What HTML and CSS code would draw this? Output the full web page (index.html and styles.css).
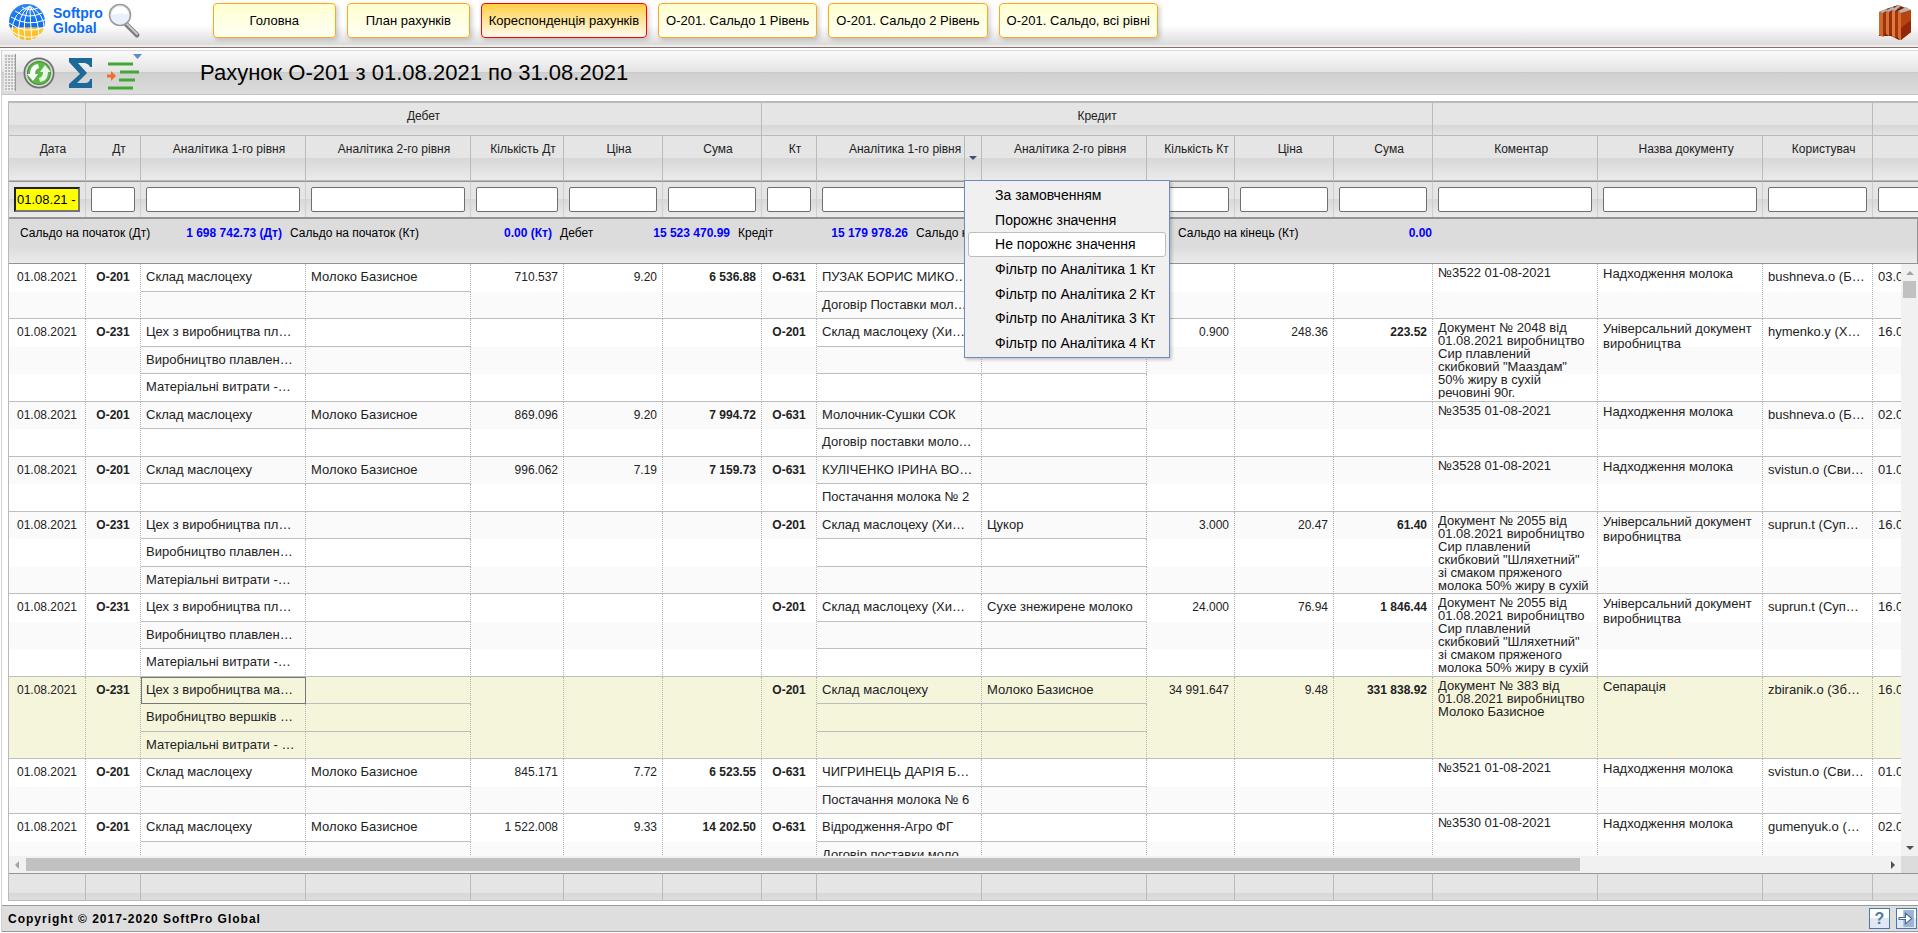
FILE: index.html
```html
<!DOCTYPE html>
<html lang="uk">
<head>
    <meta charset="UTF-8">
    <meta name="viewport" content="width=device-width, initial-scale=1.0">
    <title>Рахунок О-201 - Softpro Global</title>
    <link rel="stylesheet" href="styles.css">
</head>
<body>

    <!-- Header -->
    <header class="header">
        <a class="logo" href="#">
            <svg width="38" height="38" viewBox="0 0 38 38">
                <defs>
                    <linearGradient id="globe" x1="0" y1="0" x2="0" y2="1">
                        <stop offset="0" stop-color="#2f86f0"/>
                        <stop offset="0.64" stop-color="#0d6cf0"/>
                        <stop offset="0.66" stop-color="#ffc93c"/>
                        <stop offset="1" stop-color="#fbb917"/>
                    </linearGradient>
                </defs>
                <circle cx="19" cy="19" r="18" fill="url(#globe)"/>
                <g fill="none" stroke="#fff" stroke-width="1">
                    <path d="M22 3Q8 12 11 36M22 3Q14 14 17 37M22 3Q22 16 24 37M22 3Q30 14 31 33M22 3Q37 12 36 26M22 3Q4 9 4 29"/>
                    <path d="M14 4Q21 9 30 5M7 8Q20 17 34 10M3 14Q19 24 37 17M1 20Q18 32 37 24M3 28Q17 38 33 32"/>
                </g>
            </svg>
            <span class="logo-name">Softpro<br>Global</span>
        </a>
        <button class="search-btn" aria-label="Пошук">
            <svg width="34" height="36" viewBox="0 0 34 36">
                <path d="M18 21L29 32" stroke="#7d7d7d" stroke-width="5" stroke-linecap="round"/>
                <path d="M19 21L29 31" stroke="#c9c9c9" stroke-width="2" stroke-linecap="round"/>
                <circle cx="12" cy="12" r="10.5" fill="#e6f1fb" stroke="#9b9b9b" stroke-width="1.6"/>
                <path d="M4 12a8 8 0 0 1 16 -1q-8 -2 -16 1z" fill="#fff"/>
            </svg>
        </button>
        <nav class="menu">
            <button class="menu-btn">Головна</button>
            <button class="menu-btn">План рахунків</button>
            <button class="menu-btn active">Кореспонденція рахунків</button>
            <button class="menu-btn">О-201. Сальдо 1 Рівень</button>
            <button class="menu-btn">О-201. Сальдо 2 Рівень</button>
            <button class="menu-btn">О-201. Сальдо, всі рівні</button>
        </nav>
        <button class="books-btn" aria-label="Довідники">
            <svg width="36" height="36" viewBox="0 0 36 36">
                <path d="M2 8L9 5L15 3L21 1L34 6V28L22 36L14 32L2 32z" fill="#7c2203"/>
                <path d="M2 8L6 9V33L2 31z" fill="#d0682f"/>
                <path d="M6 9L9 8V28L6 33z" fill="#a03509"/>
                <path d="M9 7L12 8V32L9 30z" fill="#d4703a"/>
                <path d="M12 8L15 7V29L12 32z" fill="#9a3008"/>
                <path d="M15 6L18 7V34L15 32z" fill="#dc7c44"/>
                <path d="M18 7L21 7V33L18 34z" fill="#a4370a"/>
                <path d="M21 7L24 9V36L21 34z" fill="#d66e34"/>
                <path d="M24 9L34 6V28L24 36z" fill="#b8430f"/>
                <path d="M24 24L34 16V28L24 36z" fill="#93290a"/>
                <path d="M2 8L9 5L11 6L6 9zM9 7L15 3L18 4L12 8zM15 6L21 1L24 2L18 7zM21 7L29 3L34 6L24 9z" fill="#b9b4ae"/>
            </svg>
        </button>
    </header>

    <div class="page">
        <!-- Toolbar -->
        <div class="toolbar">
            <span class="grip"></span>
            <button class="tool-btn" aria-label="Оновити">
                <svg width="32" height="34" viewBox="0 0 32 34">
                    <circle cx="16" cy="17" r="15.5" fill="#6f6f6f"/>
                    <circle cx="16" cy="17" r="13.8" fill="#d7d7d7"/>
                    <circle cx="16" cy="17" r="12" fill="#3f8f2d"/>
                    <circle cx="16" cy="17" r="11" fill="#58b947"/>
                    <path d="M15 8Q7 9 7 18L4 18L10 25L15 18L12 18Q12 13 16 12z" fill="#fff"/>
                    <path d="M17 26Q25 25 25 16L28 16L22 9L17 16L20 16Q20 21 16 22z" fill="#e9f7e6"/>
                </svg>
            </button>
            <button class="tool-btn" aria-label="Сума">
                <svg width="24" height="30" viewBox="0 0 24 30">
                    <path d="M0 0H23V9H21Q20 6 16 5H9L18 15L8 25H17Q21 24 21 21H23V30H0V26L11 16L0 4z" fill="#1d6a9a"/>
                </svg>
            </button>
            <button class="tool-btn" aria-label="Рівні">
                <svg width="36" height="38" viewBox="0 0 36 38">
                    <path d="M26 0H35L30.500 5z" fill="#5b8bd0"/>
                    <path d="M1 10H26M13 18H32M12 26H28M1 34H26" stroke="#41a832" stroke-width="3"/>
                    <path d="M0 22H6" stroke="#f0702a" stroke-width="3"/>
                    <path d="M4 17L9 22L4 27z" fill="#f0702a"/>
                </svg>
            </button>
            <h1 class="title">Рахунок О-201 з 01.08.2021 по 31.08.2021</h1>
        </div>

        <!-- Grid -->
        <div class="grid">
            <table class="grid-table head-table">
                <colgroup>
                    <col class="w-date"><col class="w-code"><col class="w-text"><col class="w-text"><col class="w-qty"><col class="w-sum"><col class="w-sum">
                    <col class="w-code"><col class="w-text"><col class="w-text"><col class="w-qtyk"><col class="w-sum"><col class="w-sum">
                    <col class="w-text"><col class="w-text"><col class="w-user"><col class="w-text">
                </colgroup>
                <thead>
                    <tr class="group-row">
                        <th></th>
                        <th colspan="6">Дебет</th>
                        <th colspan="6">Кредит</th>
                        <th colspan="3"></th>
                        <th></th>
                    </tr>
                    <tr class="name-row">
                        <th>Дата</th>
                        <th>Дт</th>
                        <th>Аналітика 1-го рівня</th>
                        <th>Аналітика 2-го рівня</th>
                        <th>Кількість Дт</th>
                        <th>Ціна</th>
                        <th>Сума</th>
                        <th>Кт</th>
                        <th class="with-menu">Аналітика 1-го рівня
                            <button class="col-arrow" aria-label="Меню колонки"></button>
                            <!-- Column menu -->
                            <div class="col-menu">
                                <button>За замовченням</button>
                                <button>Порожнє значення</button>
                                <button class="hover">Не порожнє значення</button>
                                <button>Фільтр по Аналітика 1 Кт</button>
                                <button>Фільтр по Аналітика 2 Кт</button>
                                <button>Фільтр по Аналітика 3 Кт</button>
                                <button>Фільтр по Аналітика 4 Кт</button>
                            </div>
                        </th>
                        <th>Аналітика 2-го рівня</th>
                        <th>Кількість Кт</th>
                        <th>Ціна</th>
                        <th>Сума</th>
                        <th>Коментар</th>
                        <th>Назва документу</th>
                        <th>Користувач</th>
                        <th></th>
                    </tr>
                    <tr class="filter-row">
                        <td><input class="date-filter" type="text" value="01.08.21 - 31.08.21" aria-label="Дата"></td>
                        <td><input type="text" aria-label="Дт"></td>
                        <td><input type="text" aria-label="Аналітика 1 Дт"></td>
                        <td><input type="text" aria-label="Аналітика 2 Дт"></td>
                        <td><input type="text" aria-label="Кількість Дт"></td>
                        <td><input type="text" aria-label="Ціна Дт"></td>
                        <td><input type="text" aria-label="Сума Дт"></td>
                        <td><input type="text" aria-label="Кт"></td>
                        <td><input type="text" aria-label="Аналітика 1 Кт"></td>
                        <td><input type="text" aria-label="Аналітика 2 Кт"></td>
                        <td><input type="text" aria-label="Кількість Кт"></td>
                        <td><input type="text" aria-label="Ціна Кт"></td>
                        <td><input type="text" aria-label="Сума Кт"></td>
                        <td><input type="text" aria-label="Коментар"></td>
                        <td><input type="text" aria-label="Назва документу"></td>
                        <td><input type="text" aria-label="Користувач"></td>
                        <td><input type="text" aria-label="Дата документу"></td>
                    </tr>
                </thead>
            </table>

            <!-- Totals -->
            <div class="totals">
                <div class="total wide"><span>Сальдо на початок (Дт)</span><b>1 698 742.73 (Дт)</b></div>
                <div class="total wide"><span>Сальдо на початок (Кт)</span><b>0.00 (Кт)</b></div>
                <div class="total"><span>Дебет</span><b>15 523 470.99</b></div>
                <div class="total"><span>Кредіт</span><b>15 179 978.26</b></div>
                <div class="total mid"><span>Сальдо на кінець (Дт)</span></div>
                <div class="total mid"><span>Сальдо на кінець (Кт)</span><b>0.00</b></div>
            </div>

            <!-- Rows -->
            <div class="grid-body">
                <div class="rows">
                    <table class="grid-table data-table">
                        <colgroup>
                            <col class="w-date"><col class="w-code"><col class="w-text"><col class="w-text"><col class="w-qty"><col class="w-sum"><col class="w-sum">
                            <col class="w-code"><col class="w-text"><col class="w-text"><col class="w-qtyk"><col class="w-sum"><col class="w-sum">
                            <col class="w-text"><col class="w-text"><col class="w-user"><col class="w-text">
                        </colgroup>
                        <tbody>
                            <tr>
                                <td rowspan="2" class="center">01.08.2021</td>
                                <td rowspan="2" class="center bold">О-201</td>
                                <td>Склад маслоцеху</td>
                                <td>Молоко Базисное</td>
                                <td rowspan="2" class="num">710.537</td>
                                <td rowspan="2" class="num">9.20</td>
                                <td rowspan="2" class="num bold">6 536.88</td>
                                <td rowspan="2" class="center bold">О-631</td>
                                <td>ПУЗАК БОРИС МИКО…</td>
                                <td></td>
                                <td rowspan="2"></td>
                                <td rowspan="2"></td>
                                <td rowspan="2"></td>
                                <td rowspan="2"><div class="comment">№3522 01-08-2021</div></td>
                                <td rowspan="2"><div class="doc">Надходження молока</div></td>
                                <td rowspan="2">bushneva.o (Б…</td>
                                <td rowspan="2">03.0</td>
                            </tr>
                            <tr><td></td><td></td><td>Договір Поставки мол…</td><td></td></tr>

                            <tr>
                                <td rowspan="3" class="center">01.08.2021</td>
                                <td rowspan="3" class="center bold">О-231</td>
                                <td>Цех з виробництва пл…</td>
                                <td></td>
                                <td rowspan="3"></td>
                                <td rowspan="3"></td>
                                <td rowspan="3"></td>
                                <td rowspan="3" class="center bold">О-201</td>
                                <td>Склад маслоцеху (Хи…</td>
                                <td></td>
                                <td rowspan="3" class="num">0.900</td>
                                <td rowspan="3" class="num">248.36</td>
                                <td rowspan="3" class="num bold">223.52</td>
                                <td rowspan="3"><div class="comment">Документ № 2048 від 01.08.2021 виробництво Сир плавлений скибковий "Мааздам" 50% жиру в сухій речовині 90г.</div></td>
                                <td rowspan="3"><div class="doc">Універсальний документ виробництва</div></td>
                                <td rowspan="3">hymenko.y (Х…</td>
                                <td rowspan="3">16.0</td>
                            </tr>
                            <tr><td>Виробництво плавлен…</td><td></td><td></td><td></td></tr>
                            <tr><td>Матеріальні витрати -…</td><td></td><td></td><td></td></tr>

                            <tr>
                                <td rowspan="2" class="center">01.08.2021</td>
                                <td rowspan="2" class="center bold">О-201</td>
                                <td>Склад маслоцеху</td>
                                <td>Молоко Базисное</td>
                                <td rowspan="2" class="num">869.096</td>
                                <td rowspan="2" class="num">9.20</td>
                                <td rowspan="2" class="num bold">7 994.72</td>
                                <td rowspan="2" class="center bold">О-631</td>
                                <td>Молочник-Сушки СОК</td>
                                <td></td>
                                <td rowspan="2"></td>
                                <td rowspan="2"></td>
                                <td rowspan="2"></td>
                                <td rowspan="2"><div class="comment">№3535 01-08-2021</div></td>
                                <td rowspan="2"><div class="doc">Надходження молока</div></td>
                                <td rowspan="2">bushneva.o (Б…</td>
                                <td rowspan="2">02.0</td>
                            </tr>
                            <tr><td></td><td></td><td>Договір поставки моло…</td><td></td></tr>

                            <tr>
                                <td rowspan="2" class="center">01.08.2021</td>
                                <td rowspan="2" class="center bold">О-201</td>
                                <td>Склад маслоцеху</td>
                                <td>Молоко Базисное</td>
                                <td rowspan="2" class="num">996.062</td>
                                <td rowspan="2" class="num">7.19</td>
                                <td rowspan="2" class="num bold">7 159.73</td>
                                <td rowspan="2" class="center bold">О-631</td>
                                <td>КУЛІЧЕНКО ІРИНА ВО…</td>
                                <td></td>
                                <td rowspan="2"></td>
                                <td rowspan="2"></td>
                                <td rowspan="2"></td>
                                <td rowspan="2"><div class="comment">№3528 01-08-2021</div></td>
                                <td rowspan="2"><div class="doc">Надходження молока</div></td>
                                <td rowspan="2">svistun.o (Сви…</td>
                                <td rowspan="2">01.0</td>
                            </tr>
                            <tr><td></td><td></td><td>Постачання молока № 2</td><td></td></tr>

                            <tr>
                                <td rowspan="3" class="center">01.08.2021</td>
                                <td rowspan="3" class="center bold">О-231</td>
                                <td>Цех з виробництва пл…</td>
                                <td></td>
                                <td rowspan="3"></td>
                                <td rowspan="3"></td>
                                <td rowspan="3"></td>
                                <td rowspan="3" class="center bold">О-201</td>
                                <td>Склад маслоцеху (Хи…</td>
                                <td>Цукор</td>
                                <td rowspan="3" class="num">3.000</td>
                                <td rowspan="3" class="num">20.47</td>
                                <td rowspan="3" class="num bold">61.40</td>
                                <td rowspan="3"><div class="comment">Документ № 2055 від 01.08.2021 виробництво Сир плавлений скибковий "Шляхетний" зі смаком пряженого молока 50% жиру в сухій речов. 100г.</div></td>
                                <td rowspan="3"><div class="doc">Універсальний документ виробництва</div></td>
                                <td rowspan="3">suprun.t (Суп…</td>
                                <td rowspan="3">16.0</td>
                            </tr>
                            <tr><td>Виробництво плавлен…</td><td></td><td></td><td></td></tr>
                            <tr><td>Матеріальні витрати -…</td><td></td><td></td><td></td></tr>

                            <tr>
                                <td rowspan="3" class="center">01.08.2021</td>
                                <td rowspan="3" class="center bold">О-231</td>
                                <td>Цех з виробництва пл…</td>
                                <td></td>
                                <td rowspan="3"></td>
                                <td rowspan="3"></td>
                                <td rowspan="3"></td>
                                <td rowspan="3" class="center bold">О-201</td>
                                <td>Склад маслоцеху (Хи…</td>
                                <td>Сухе знежирене молоко</td>
                                <td rowspan="3" class="num">24.000</td>
                                <td rowspan="3" class="num">76.94</td>
                                <td rowspan="3" class="num bold">1 846.44</td>
                                <td rowspan="3"><div class="comment">Документ № 2055 від 01.08.2021 виробництво Сир плавлений скибковий "Шляхетний" зі смаком пряженого молока 50% жиру в сухій речов. 100г.</div></td>
                                <td rowspan="3"><div class="doc">Універсальний документ виробництва</div></td>
                                <td rowspan="3">suprun.t (Суп…</td>
                                <td rowspan="3">16.0</td>
                            </tr>
                            <tr><td>Виробництво плавлен…</td><td></td><td></td><td></td></tr>
                            <tr><td>Матеріальні витрати -…</td><td></td><td></td><td></td></tr>

                            <tr class="selected">
                                <td rowspan="3" class="center">01.08.2021</td>
                                <td rowspan="3" class="center bold">О-231</td>
                                <td class="focused">Цех з виробництва ма…</td>
                                <td></td>
                                <td rowspan="3"></td>
                                <td rowspan="3"></td>
                                <td rowspan="3"></td>
                                <td rowspan="3" class="center bold">О-201</td>
                                <td>Склад маслоцеху</td>
                                <td>Молоко Базисное</td>
                                <td rowspan="3" class="num">34 991.647</td>
                                <td rowspan="3" class="num">9.48</td>
                                <td rowspan="3" class="num bold">331 838.92</td>
                                <td rowspan="3"><div class="comment">Документ № 383 від 01.08.2021 виробництво Молоко Базисное</div></td>
                                <td rowspan="3"><div class="doc">Сепарація</div></td>
                                <td rowspan="3">zbiranik.o (Зб…</td>
                                <td rowspan="3">16.0</td>
                            </tr>
                            <tr class="selected"><td>Виробництво вершків …</td><td></td><td></td><td></td></tr>
                            <tr class="selected"><td>Матеріальні витрати - …</td><td></td><td></td><td></td></tr>

                            <tr>
                                <td rowspan="2" class="center">01.08.2021</td>
                                <td rowspan="2" class="center bold">О-201</td>
                                <td>Склад маслоцеху</td>
                                <td>Молоко Базисное</td>
                                <td rowspan="2" class="num">845.171</td>
                                <td rowspan="2" class="num">7.72</td>
                                <td rowspan="2" class="num bold">6 523.55</td>
                                <td rowspan="2" class="center bold">О-631</td>
                                <td>ЧИГРИНЕЦЬ ДАРІЯ Б…</td>
                                <td></td>
                                <td rowspan="2"></td>
                                <td rowspan="2"></td>
                                <td rowspan="2"></td>
                                <td rowspan="2"><div class="comment">№3521 01-08-2021</div></td>
                                <td rowspan="2"><div class="doc">Надходження молока</div></td>
                                <td rowspan="2">svistun.o (Сви…</td>
                                <td rowspan="2">01.0</td>
                            </tr>
                            <tr><td></td><td></td><td>Постачання молока № 6</td><td></td></tr>

                            <tr>
                                <td rowspan="2" class="center">01.08.2021</td>
                                <td rowspan="2" class="center bold">О-201</td>
                                <td>Склад маслоцеху</td>
                                <td>Молоко Базисное</td>
                                <td rowspan="2" class="num">1 522.008</td>
                                <td rowspan="2" class="num">9.33</td>
                                <td rowspan="2" class="num bold">14 202.50</td>
                                <td rowspan="2" class="center bold">О-631</td>
                                <td>Відродження-Агро ФГ</td>
                                <td></td>
                                <td rowspan="2"></td>
                                <td rowspan="2"></td>
                                <td rowspan="2"></td>
                                <td rowspan="2"><div class="comment">№3530 01-08-2021</div></td>
                                <td rowspan="2"><div class="doc">Надходження молока</div></td>
                                <td rowspan="2">gumenyuk.o (…</td>
                                <td rowspan="2">02.0</td>
                            </tr>
                            <tr><td></td><td></td><td>Договір поставки моло…</td><td></td></tr>
                        </tbody>
                    </table>
                </div>
                <div class="scroll-v">
                    <span class="arrow up"></span>
                    <span class="thumb-v"></span>
                    <span class="arrow down"></span>
                </div>
            </div>
            <div class="scroll-h">
                <span class="arrow left"></span>
                <span class="track"><span class="thumb-h"></span></span>
                <span class="arrow right"></span>
                <span class="corner"></span>
            </div>

            <table class="grid-table foot-table">
                <colgroup>
                    <col class="w-date"><col class="w-code"><col class="w-text"><col class="w-text"><col class="w-qty"><col class="w-sum"><col class="w-sum">
                    <col class="w-code"><col class="w-text"><col class="w-text"><col class="w-qtyk"><col class="w-sum"><col class="w-sum">
                    <col class="w-text"><col class="w-text"><col class="w-user"><col class="w-text">
                </colgroup>
                <tbody>
                    <tr><td></td><td></td><td></td><td></td><td></td><td></td><td></td><td></td><td></td><td></td><td></td><td></td><td></td><td></td><td></td><td></td><td></td></tr>
                </tbody>
            </table>
        </div>

        <!-- Footer -->
        <footer class="footer">
            <p>Copyright © 2017-2020 SoftPro Global</p>
            <button class="foot-btn" aria-label="Довідка">?</button>
            <button class="foot-btn" aria-label="Вихід">
                <svg width="17" height="17" viewBox="0 0 16 16">
                    <rect x="5" y="0" width="10" height="16" fill="#9db4d6"/>
                    <path d="M1 7H7V3L13 8L7 13V9H1z" fill="#fff" stroke="#4a6a94"/>
                </svg>
            </button>
        </footer>
    </div>

</body>
</html>
```

FILE: styles.css
```css
/* Basic Styles */
body {
    font-family: "Liberation Sans", Arial, sans-serif;
    font-size: 13px;
    color: #222;
    margin: 0;
    height: 100vh;
    display: flex;
    flex-direction: column;
    overflow: hidden;
    background-color: #fff;
}

button {
    font-family: inherit;
    padding: 0;
    border: none;
    background: none;
    cursor: pointer;
}

svg {
    display: block;
}

/* Header Styles */
.header {
    display: flex;
    align-items: flex-start;
    height: 45px;
    background: linear-gradient(#fff 25px, #d8d8d8);
    border-bottom: 1px solid #7f7471;
    box-shadow: inset 0 -2px 0 #f1ece9;
    padding: 0 5px 2px 8px;
    flex: none;
}

.logo {
    display: flex;
    gap: 7px;
    padding-top: 3px;
    color: #0a6cf5;
    text-decoration: none;
}

.logo-name {
    font-size: 14px;
    line-height: 15px;
    font-weight: bold;
    padding-top: 3px;
}

.search-btn {
    margin: 3px 0 0 5px;
}

.menu {
    display: flex;
    gap: 11px;
    margin-left: 71px;
    padding-top: 3px;
}

.menu-btn {
    min-width: 123px;
    height: 35px;
    padding: 0 7px;
    font-size: 13px;
    color: #000;
    border: 1px solid #fca91b;
    border-radius: 4px;
    background: linear-gradient(#ffffcf, #fffff5);
    box-shadow: 2px 2px 5px rgba(0, 0, 0, 0.2);
}

.menu-btn.active {
    border-color: #f00;
    background: linear-gradient(#ffcf45, #fffbf0);
}

.books-btn {
    margin: 4px 0 0 auto;
}

/* Page */
.page {
    flex: 1;
    min-height: 0;
    display: flex;
    flex-direction: column;
    margin: 2px 0 1px 1px;
    border-top: 1px solid #d9d9df;
    border-left: 1px solid #d0d0d0;
    overflow: hidden;
}

/* Toolbar */
.toolbar {
    display: flex;
    align-items: center;
    height: 43px;
    flex: none;
    background: linear-gradient(#fafafa, #e4e4e4 21px, #c6c6c6 21px, #d0d0d0 22px, #dcdcdc);
    border-bottom: 1px solid #c4c4c4;
}

.grip {
    width: 11px;
    height: 37px;
    margin: 0 7px 0 2px;
    border-right: 1px solid #999;
    background:
        linear-gradient(#ececec 1px, transparent 1px) 0 0 / 3px 3px,
        linear-gradient(90deg, #ececec 1px, transparent 1px) 0 0 / 3px 3px,
        #bdbdbd;
}

.tool-btn {
    margin-right: 14px;
}

.title {
    margin: 0 0 0 43px;
    font-size: 22px;
    font-weight: normal;
    color: #000;
}

/* Grid */
.grid {
    flex: 1;
    min-height: 0;
    display: flex;
    flex-direction: column;
    margin: 6px 0 4px 6px;
    border-top: 2px solid #b9b9b9;
    border-left: 1px solid #b9b9b9;
}

.grid-table {
    table-layout: fixed;
    width: 2029px;
    border-spacing: 0;
    flex: none;
}

.w-date { width: 77px; }
.w-code { width: 55px; }
.w-text { width: 165px; }
.w-qty { width: 93px; }
.w-qtyk { width: 88px; }
.w-sum { width: 99px; }
.w-user { width: 110px; }

/* Grid header */
.head-table th {
    box-sizing: border-box;
    font-size: 12px;
    line-height: 14px;
    font-weight: normal;
    vertical-align: top;
    white-space: nowrap;
    border-right: 1px solid #bababa;
    border-bottom: 1px solid #bababa;
}

.group-row th {
    height: 33px;
    padding: 6px 0 0;
    background: linear-gradient(#e5e5e5 22px, #d7d7d7 22px, #e2e2e2);
}

.name-row th {
    height: 45px;
    padding: 6px 0 0 12px;
    background: linear-gradient(#e5e5e5 22px, #d7d7d7 22px, #ebebeb);
}

.filter-row td {
    box-sizing: border-box;
    height: 36px;
    padding: 5px;
    border-top: 1px solid #959595;
    border-right: 1px solid #cecece;
    background: linear-gradient(#e5e5e5 17px, #d8d8d8 17px, #ebebeb);
}

.filter-row input {
    display: block;
    box-sizing: border-box;
    width: 100%;
    height: 25px;
    padding: 1px 2px;
    font-family: inherit;
    font-size: 13px;
    border: 1px solid #6f6f6f;
    border-radius: 2px;
    background-color: #fff;
}

.filter-row .date-filter {
    padding: 0 1px;
    background-color: #ff0;
    border: 2px inset #767676;
    border-radius: 0;
}

/* Column menu */
.name-row .with-menu {
    position: relative;
}

.col-arrow {
    position: absolute;
    top: 0;
    right: 0;
    width: 17px;
    height: 44px;
    border-left: 1px solid #bababa;
}

.col-arrow::after {
    content: "";
    display: block;
    width: 0;
    margin-left: 4px;
    border: 4px solid transparent;
    border-top-color: #3d5273;
    border-bottom: none;
}

.col-menu {
    position: absolute;
    z-index: 10;
    top: 44px;
    left: 147px;
    display: flex;
    flex-direction: column;
    box-sizing: border-box;
    width: 206px;
    height: 178px;
    padding: 2px 3px;
    background-color: #f0f0f0;
    border: 1px solid #6d8cba;
    box-shadow: 2px 2px 3px rgba(0, 0, 0, 0.2);
}

.col-menu button {
    flex: 1;
    padding-left: 26px;
    font-size: 14px;
    text-align: left;
    white-space: nowrap;
    color: #000;
    border: 1px solid transparent;
    border-radius: 3px;
}

.col-menu button.hover {
    background-color: #fff;
    border-color: #bdbdbd;
}

/* Totals */
.totals {
    display: flex;
    gap: 8px;
    height: 37px;
    flex: none;
    padding: 7px 11px 0;
    font-size: 12px;
    line-height: 14px;
    color: #000;
    white-space: nowrap;
    background: linear-gradient(#dcdcdc 27px, #ebebeb);
    border: 1px solid #949494;
    border-top-width: 2px;
    border-left: none;
}

.total {
    display: flex;
    justify-content: space-between;
    width: 170px;
}

.total.wide {
    width: 262px;
}

.total.mid {
    width: 254px;
}

.total b {
    color: #00f;
}

/* Grid rows */
.grid-body {
    flex: 1;
    min-height: 0;
    display: flex;
}

.rows {
    flex: 1;
    min-width: 0;
    overflow: hidden;
}

.data-table {
    background: repeating-linear-gradient(#fff 0, #fff 28px, #fafafa 28px, #fafafa 55px);
}

.data-table tr {
    height: 27px;
}

.data-table tr:nth-child(odd) {
    height: 28px;
}

.data-table td {
    box-sizing: border-box;
    padding: 0 5px;
    line-height: 26px;
    vertical-align: top;
    white-space: nowrap;
    overflow: hidden;
    border-right: 1px dotted #b5b5b5;
    border-bottom: 1px solid #bdbdbd;
}

.data-table .center {
    font-size: 12px;
    text-align: center;
}

.data-table .num {
    font-size: 12px;
    text-align: right;
}

.data-table .bold {
    font-weight: bold;
}

.data-table .selected td {
    background-color: #f5f5dc;
}

.data-table .focused {
    outline: 1px solid #777;
    outline-offset: -1px;
}

.comment,
.doc {
    white-space: normal;
    overflow: hidden;
    max-height: 79px;
    margin-top: 2px;
}

.comment {
    line-height: 13px;
}

.doc {
    line-height: 15px;
}

/* Scrollbars */
.scroll-v {
    display: flex;
    flex-direction: column;
    align-items: center;
    width: 17px;
    background-color: #f1f1f1;
}

.thumb-v {
    width: 13px;
    height: 17px;
    margin-top: 6px;
    background-color: #c1c1c1;
}

.scroll-h {
    display: flex;
    align-items: center;
    height: 17px;
    flex: none;
    background-color: #f1f1f1;
}

.track {
    flex: 1;
    margin: 0 7px;
}

.thumb-h {
    display: block;
    height: 13px;
    margin-right: 304px;
    background-color: #c1c1c1;
}

.corner {
    width: 17px;
    height: 17px;
    margin-left: 6px;
    background-color: #dcdcdc;
}

.arrow {
    border: 4px solid transparent;
}

.arrow.up {
    margin-top: 7px;
    border-top: none;
    border-bottom-color: #a3a3a3;
}

.arrow.down {
    margin: auto 0 6px;
    border-bottom: none;
    border-top-color: #505050;
}

.arrow.left {
    margin-left: 6px;
    border-left: none;
    border-right-color: #a3a3a3;
}

.arrow.right {
    border-right: none;
    border-left-color: #505050;
}

/* Grid footer */
.foot-table td {
    height: 26px;
    padding: 0;
    border-top: 1px solid #949494;
    border-right: 1px solid #bababa;
    border-bottom: 1px solid #bababa;
    background: linear-gradient(#e5e5e5 19px, #d7d7d7 19px, #dedede);
}

/* Footer */
.footer {
    display: flex;
    align-items: center;
    gap: 6px;
    height: 25px;
    flex: none;
    padding: 0 1px 0 6px;
    background-color: #dedede;
    border-top: 1px solid #999;
    border-bottom: 1px solid #999;
}

.footer p {
    margin: 0 auto 0 0;
    font-size: 12px;
    font-weight: bold;
    letter-spacing: 1px;
    color: #000;
}

.foot-btn {
    display: flex;
    align-items: center;
    justify-content: center;
    width: 21px;
    height: 21px;
    font-size: 16px;
    font-weight: bold;
    color: #57779f;
    border: 1px solid #4a77ad;
    background: linear-gradient(#fff 50%, #dfe8f5 50%);
}
```
